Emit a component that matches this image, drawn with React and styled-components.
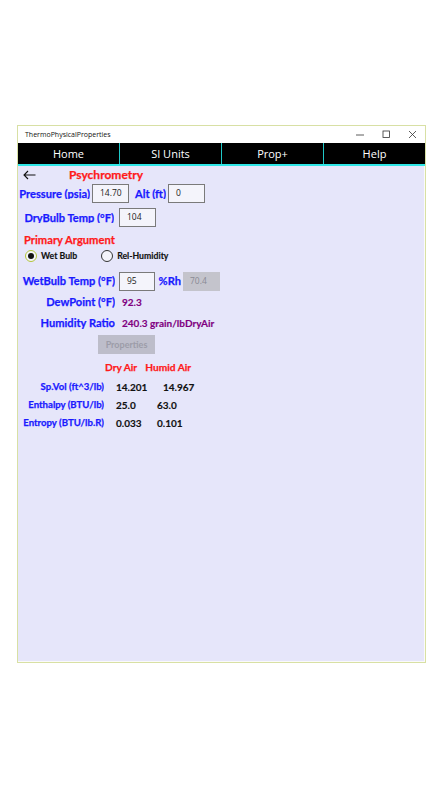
import React from 'react';
import styled, { createGlobalStyle } from 'styled-components';

const GlobalStyle = createGlobalStyle`
  body {
    margin: 0;
    background: #ffffff;
    font-family: Lato, Roboto, sans-serif;
  }
`;

// #region Styles

const Page = styled.div`
  padding: 125px 0 0 17px;
`;

const Frame = styled.div`
  width: 407px;
  height: 536px;
  border: 1px solid #d8e0a4;
  display: flex;
  flex-direction: column;
  background: #ffffff;
`;

const TitleBar = styled.div`
  height: 17px;
  display: flex;
  align-items: center;
  padding-left: 7px;
  font-family: "Open Sans", sans-serif;
  font-size: 7px;
  color: #111;
  background: #fff;
`;

const TitleText = styled.div`
  flex: 1;
`;

const WinButton = styled.div`
  width: 26px;
  display: flex;
  justify-content: center;
  align-items: center;
`;

const NavBar = styled.div`
  display: flex;
  height: 21px;
  background: #000;
  border-bottom: 2px solid #2ee6e6;
`;

const NavItem = styled.div`
  flex: 1;
  display: flex;
  align-items: center;
  justify-content: center;
  color: #fff;
  font-family: "Open Sans", sans-serif;
  font-size: 11px;
  border-left: ${p => (p.$first ? 'none' : '1.5px solid #20c8c8')};
`;

const Content = styled.div`
  flex: 1;
  background: #e6e6fa;
  display: flex;
  flex-direction: column;
  border: 1px solid #fafafa;
  border-top: none;
  border-left: none;
`;

const Row = styled.div`
  display: flex;
  align-items: center;
  line-height: 1;
  height: ${p => p.$h || 18}px;
  margin-top: ${p => p.$mt || 0}px;
  padding-left: ${p => p.$pl || 0}px;
`;

const Label = styled.span`
  color: #1a1aff;
  font-weight: 700;
  font-size: ${p => p.$size || 11.1}px;
  -webkit-text-stroke: 0.25px #1a1aff;
  white-space: nowrap;
`;

const LabelCell = styled.div`
  flex: none;
  width: ${p => p.$w}px;
  margin-right: ${p => p.$mr || 0}px;
  display: flex;
  align-items: center;
  justify-content: safe flex-end;
  overflow: hidden;
`;

const Heading = styled.span`
  color: #ff1a1a;
  font-weight: 700;
  font-size: ${p => p.$size || 11.2}px;
  -webkit-text-stroke: 0.25px #ff1a1a;
  margin-left: ${p => p.$ml || 0}px;
  white-space: nowrap;
`;

const Value = styled.span`
  color: ${p => p.$color || '#111'};
  font-weight: 700;
  font-size: ${p => p.$size || 10}px;
  -webkit-text-stroke: 0.15px ${p => p.$color || '#111'};
  white-space: nowrap;
`;

const Cell = styled.div`
  width: ${p => p.$w}px;
  flex: none;
  display: flex;
  align-items: center;
`;

const Input = styled.div`
  box-sizing: border-box;
  width: ${p => p.$w || 37}px;
  height: 19px;
  border: ${p => (p.$disabled ? 'none' : '1.5px solid #7a7a7a')};
  background: ${p => (p.$disabled ? '#c4c4cc' : '#f4f4fb')};
  color: ${p => (p.$disabled ? '#8a8a94' : '#222')};
  font-family: "Open Sans", sans-serif;
  font-size: 8.5px;
  display: flex;
  align-items: center;
  padding-left: 7px;
  margin-right: ${p => p.$mr || 0}px;
`;

const BackArrow = styled.div`
  display: flex;
  align-items: center;
  width: 46px;
`;

const RadioDot = styled.span`
  box-sizing: border-box;
  width: 12px;
  height: 12px;
  border-radius: 50%;
  border: 1.5px solid ${p => (p.$checked ? '#b2c43a' : '#333')};
  background: #f4f4fb;
  display: flex;
  align-items: center;
  justify-content: center;
  margin-right: 4px;
  &::after {
    content: '';
    display: ${p => (p.$checked ? 'block' : 'none')};
    width: 6px;
    height: 6px;
    border-radius: 50%;
    background: #111;
  }
`;

const RadioLabel = styled.label`
  display: flex;
  align-items: center;
  font-size: 8.7px;
  font-weight: 700;
  -webkit-text-stroke: 0.15px #111;
  color: #111;
  margin-right: ${p => p.$mr || 0}px;
`;

const Button = styled.div`
  width: 57px;
  height: 19px;
  background: #bdbdca;
  color: #9c9ca8;
  font-size: 9px;
  font-weight: 700;
  display: flex;
  align-items: center;
  justify-content: center;
`;

// #endregion

const tableRows = [
  { label: 'Sp.Vol (ft^3/lb)', dry: '14.201', humid: '14.967', dryW: 47 },
  { label: 'Enthalpy (BTU/lb)', dry: '25.0', humid: '63.0', dryW: 41 },
  { label: 'Entropy (BTU/lb.R)', dry: '0.033', humid: '0.101', dryW: 41 },
];

export default function App() {
  return (
    <Page>
      <GlobalStyle />
      <Frame>
        <TitleBar>
          <TitleText>ThermoPhysicalProperties</TitleText>
          <WinButton>
            <svg width="9" height="9" viewBox="0 0 9 9"><path d="M0 5h8" stroke="#333" strokeWidth="0.8" /></svg>
          </WinButton>
          <WinButton>
            <svg width="9" height="9" viewBox="0 0 9 9"><rect x="1" y="1" width="6.5" height="6.5" fill="none" stroke="#333" strokeWidth="0.8" /></svg>
          </WinButton>
          <WinButton>
            <svg width="9" height="9" viewBox="0 0 9 9"><path d="M1 1l7 7M8 1l-7 7" stroke="#333" strokeWidth="0.8" /></svg>
          </WinButton>
        </TitleBar>
        <NavBar>
          <NavItem $first>Home</NavItem>
          <NavItem>SI Units</NavItem>
          <NavItem>Prop+</NavItem>
          <NavItem>Help</NavItem>
        </NavBar>
        <Content>
          <Row $h={18} $pl={5}>
            <BackArrow>
              <svg width="13" height="10" viewBox="0 0 13 10">
                <path d="M12.5 5H1M5 1L1 5l4 4" fill="none" stroke="#111" strokeWidth="1.1" />
              </svg>
            </BackArrow>
            <Heading $size={12}>Psychrometry</Heading>
          </Row>
          <Row $h={19}>
            <LabelCell $w={72} $mr={2}><Label>Pressure (psia)</Label></LabelCell>
            <Input $w={37} $mr={3}>14.70</Input>
            <LabelCell $w={34} $mr={2}><Label>Alt (ft)</Label></LabelCell>
            <Input $w={37}>0</Input>
          </Row>
          <Row $h={19} $mt={5}>
            <LabelCell $w={96} $mr={5}><Label>DryBulb Temp (°F)</Label></LabelCell>
            <Input $w={37}>104</Input>
          </Row>
          <Row $h={18} $mt={4} $pl={6}>
            <Heading>Primary Argument</Heading>
          </Row>
          <Row $h={14} $pl={7}>
            <RadioLabel $mr={24}><RadioDot $checked />Wet Bulb</RadioLabel>
            <RadioLabel><RadioDot />Rel-Humidity</RadioLabel>
          </Row>
          <Row $h={18} $mt={9}>
            <LabelCell $w={97} $mr={4}><Label>WetBulb Temp (°F)</Label></LabelCell>
            <Input $w={36} $mr={3}>95</Input>
            <LabelCell $w={23} $mr={2}><Label>%Rh</Label></LabelCell>
            <Input $w={37} $disabled>70.4</Input>
          </Row>
          <Row $h={18} $mt={3}>
            <LabelCell $w={97} $mr={7}><Label>DewPoint (°F)</Label></LabelCell>
            <Value $color="#800080">92.3</Value>
          </Row>
          <Row $h={18} $mt={3}>
            <LabelCell $w={97} $mr={7}><Label>Humidity Ratio</Label></LabelCell>
            <Value $color="#800080">240.3 grain/lbDryAir</Value>
          </Row>
          <Row $h={19} $mt={3} $pl={80}>
            <Button>Properties</Button>
          </Row>
          <Row $h={18} $mt={4} $pl={87}>
            <Heading $size={10.2}>Dry Air</Heading>
            <Heading $size={10.2} $ml={8}>Humid Air</Heading>
          </Row>
          {tableRows.map((r, i) => (
            <Row key={r.label} $h={18} $mt={i === 0 ? 2 : 0}>
              <LabelCell $w={86} $mr={12}>
                <Label $size={9.6}>{r.label}</Label>
              </LabelCell>
              <Cell $w={r.dryW}>
                <Value>{r.dry}</Value>
              </Cell>
              <Value>{r.humid}</Value>
            </Row>
          ))}
        </Content>
      </Frame>
    </Page>
  );
}
